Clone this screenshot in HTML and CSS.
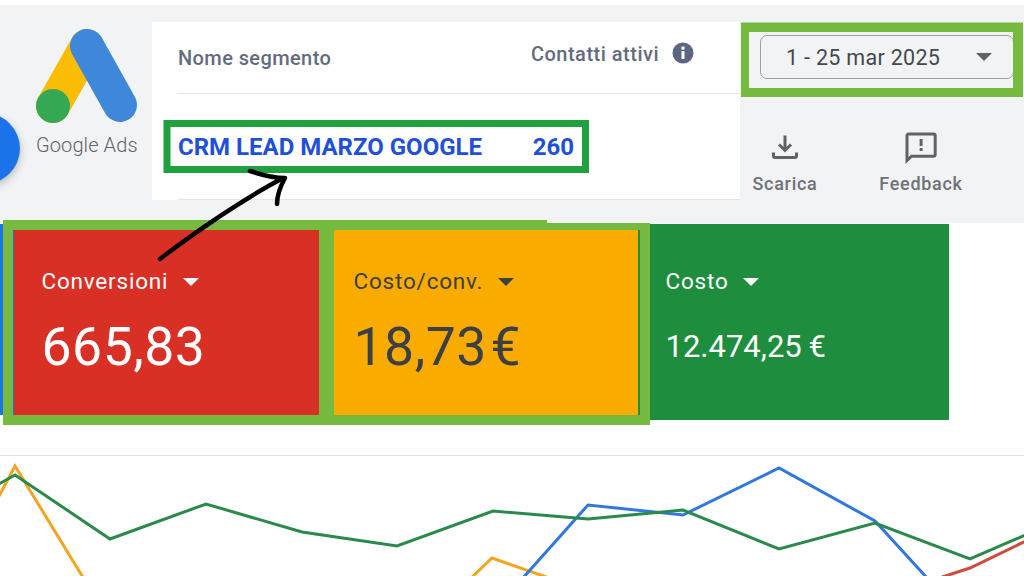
FILE: index.html
```html
<!DOCTYPE html>
<html lang="it">
<head>
<meta charset="utf-8">
<title>Google Ads</title>
<link rel="stylesheet" href="styles.css">
</head>
<body>
<div class="page">
  <header class="top">
    <div class="brand">
      <svg class="brand-mark" viewBox="0 0 104 96" width="104" height="96" aria-hidden="true">
        <line class="mark-yellow" x1="52" y1="17" x2="18" y2="77"/>
        <line class="mark-blue" x1="52" y1="17" x2="85" y2="76"/>
        <circle class="mark-green" cx="18" cy="77" r="17"/>
      </svg>
      <div class="brand-name">Google Ads</div>
    </div>
    <section class="panel">
      <div class="panel-head">
        <span class="head-name">Nome segmento</span>
        <span class="head-count">Contatti attivi
          <svg class="info" viewBox="0 0 22 22" width="22" height="22" aria-hidden="true">
            <circle cx="11" cy="11" r="10.5"/>
            <rect class="info-mark" x="9.5" y="9" width="3" height="8"/>
            <rect class="info-mark" x="9.5" y="4.6" width="3" height="3"/>
          </svg>
        </span>
      </div>
      <div class="panel-row">
        <span>CRM LEAD MARZO GOOGLE</span>
        <span>260</span>
      </div>
    </section>
    <aside class="side">
      <div class="date-wrap">
        <div class="date">
          <span class="date-text">1 - 25 mar 2025</span>
          <span class="caret caret-grey"></span>
        </div>
      </div>
      <div class="actions">
        <div class="action action-dl">
          <svg viewBox="0 0 28 28" width="28" height="28" aria-hidden="true">
            <path class="icon-line" d="M14 2.5V17M8 11.5l6 6 6-6M2.5 19.5v3.2c0 1 .8 1.8 1.8 1.8h19.4c1 0 1.8-.8 1.8-1.8v-3.2"/>
          </svg>
          <span>Scarica</span>
        </div>
        <div class="action action-fb">
          <svg viewBox="0 0 34 32" width="34" height="32" aria-hidden="true">
            <path class="icon-line" d="M3 25.5V3.6C3 2.7 3.7 2 4.6 2h25c.9 0 1.6.7 1.6 1.6v19c0 .9-.7 1.6-1.6 1.6H7.5L3 28.5z"/>
            <rect class="icon-fill" x="15.6" y="7" width="3" height="7"/>
            <rect class="icon-fill" x="15.6" y="16" width="3" height="3"/>
          </svg>
          <span>Feedback</span>
        </div>
      </div>
    </aside>
  </header>

  <section class="cards">
    <div class="card card-blue"></div>
    <div class="card card-red">
      <div class="card-label">Conversioni <span class="caret caret-white"></span></div>
      <div class="card-value">665,83</div>
    </div>
    <div class="card card-orange">
      <div class="card-label">Costo/conv. <span class="caret caret-dark"></span></div>
      <div class="card-value">18,73 €</div>
    </div>
    <div class="card card-green">
      <div class="card-label">Costo <span class="caret caret-white"></span></div>
      <div class="card-value card-value-small">12.474,25 €</div>
    </div>
  </section>

  <section class="chart">
    <svg viewBox="0 0 1024 120" width="1024" height="120" aria-hidden="true">
      <polyline class="line line-yellow" points="-10,512 15,465 84,578" transform="translate(0,-455)"/>
      <polyline class="line line-yellow" points="470,578 492,557 552,578" transform="translate(0,-455)"/>
      <polyline class="line line-blue" points="522,578 588,504 683,514 779,467 875,520 928,578" transform="translate(0,-455)"/>
      <polyline class="line line-red" points="936,578 970,567 1030,538" transform="translate(0,-455)"/>
      <polyline class="line line-green" points="-10,488 15,474 110,538 206,503 302,531 397,545 493,510 588,518 683,509 779,548 875,522 970,558 1030,532" transform="translate(0,-455)"/>
    </svg>
  </section>

  <div class="fab"></div>

  <svg class="notes" viewBox="0 0 1024 576" width="1024" height="576" aria-hidden="true">
    <rect class="note-dark" x="167" y="123.500" width="418.500" height="46"/>
    <path class="note-light-fill" d="M741 22.500H1023V97H741zM749 32V88H1013V32z"/>
    <path class="note-light-fill" d="M3 220H547V223H650V425H3zM13 230V415H319V230zM334 230V415H640V230z"/>
    <path class="note-arrow" d="M160 259C195 232 245 198 283 178M250 171C262 175 272 178 285 178C280 187 277 195 277 204"/>
  </svg>
</div>
</body>
</html>
```
FILE: styles.css
```css
* { box-sizing: border-box; }
html, body { margin: 0; padding: 0; background: #fff; }
.page {
  position: relative;
  width: 1024px;
  height: 576px;
  overflow: hidden;
  padding-top: 5px;
  font-family: Roboto, "Liberation Sans", sans-serif;
  background: #fff;
}
.top {
  display: flex;
  height: 218px;
  padding-top: 17px;
  background: #f1f3f5;
}
.brand { width: 152px; padding: 7px 0 0 36px; }
.brand-mark { display: block; overflow: visible; margin-left: -1px; }
.mark-yellow { stroke: #fbbc04; stroke-width: 34; stroke-linecap: round; }
.mark-blue { stroke: #3f88d9; stroke-width: 34; stroke-linecap: round; }
.mark-green { fill: #34a853; }
.brand-name {
  margin-top: 8px;
  font-size: 20px;
  font-weight: 300;
  letter-spacing: 0.1px;
  color: #5f6368;
  white-space: nowrap;
}
.panel {
  width: 588px;
  height: 178px;
  padding-left: 26px;
  background: #fff;
}
.panel-head {
  display: flex;
  justify-content: space-between;
  height: 72px;
  padding: 24px 46px 0 0;
  border-bottom: 1px solid #e3e5e8;
  color: #646b7d;
  font-size: 20px;
  font-weight: 500;
  letter-spacing: 0.4px;
}
.head-count {
  display: flex;
  gap: 13px;
  height: 24px;
  margin-top: -4px;
  font-size: 20px;
  letter-spacing: 0.5px;
}
.info circle { fill: #5b6682; }
.info-mark { fill: #fff; }
.panel-row {
  display: flex;
  justify-content: space-between;
  width: 562px;
  height: 106px;
  padding: 39px 166px 0 0;
  border-bottom: 1px solid #e3e5e8;
  font-size: 24px;
  font-weight: 700;
  color: #1f50d8;
}
.side { flex: 1; }
.date-wrap { padding: 13px 10px 0 20px; height: 75px; }
.date {
  display: flex;
  align-items: center;
  justify-content: space-between;
  height: 44px;
  padding: 0 21px 0 25px;
  border: 1px solid #9aa0a6;
  border-radius: 7px;
  font-size: 21.500px;
  letter-spacing: 0.3px;
  color: #44484d;
}
.caret {
  display: inline-block;
  width: 0;
  height: 0;
  border-left: 8px solid transparent;
  border-right: 8px solid transparent;
  border-top: 8px solid currentColor;
  vertical-align: 3px;
}
.caret-grey { color: #5f6368; }
.caret-white { color: #fff; margin-left: 8px; }
.caret-dark { color: #3c4043; margin-left: 8px; }
.actions {
  display: flex;
  padding-top: 36px;
  color: #6e7277;
  font-size: 18px;
  font-weight: 500;
  letter-spacing: 0.7px;
}
.action { display: flex; flex-direction: column; align-items: center; }
.action svg { display: block; }
.action-dl { margin-left: 12px; width: 66px; }
.action-fb { margin-left: 60px; width: 86px; margin-top: -1px; }
.action-dl span { margin-top: 12px; }
.action-fb span { margin-top: 9px; }
.icon-line { fill: none; stroke: #5f6368; stroke-width: 3; }
.icon-fill { fill: #5f6368; }
.cards { display: flex; height: 196px; margin-top: 1px; }
.card { padding: 44px 0 0 27.500px; width: 312px; }
.card-blue { width: 14px; height: 191px; padding: 0; background: #1a73e8; }
.card-red { background: #d93025; color: #fff; }
.card-orange { background: #f9ab00; color: #3c4043; }
.card-green { width: 311px; background: #1e8e3e; color: #fff; }
.card-label {
  height: 26px;
  font-size: 22.500px;
  letter-spacing: 0.8px;
  white-space: nowrap;
}
.card-value {
  margin-top: 22px;
  font-size: 53.500px;
  line-height: 62px;
  letter-spacing: 0.5px;
  word-spacing: -10px;
  white-space: nowrap;
}
.card-value-small { font-size: 31px; letter-spacing: 0; word-spacing: -1px; }
.chart {
  margin-top: 35px;
  height: 121px;
  border-top: 1px solid #e3e3e3;
}
.chart svg { display: block; overflow: hidden; }
.line { fill: none; stroke-width: 3; stroke-linejoin: miter; }
.line-yellow { stroke: #f2a51f; }
.line-blue { stroke: #2f78e0; }
.line-red { stroke: #cf4a3c; }
.line-green { stroke: #2a8a4a; }
.fab {
  position: absolute;
  left: -51px;
  top: 113px;
  width: 71px;
  height: 71px;
  border-radius: 50%;
  background: #1a73e8;
  box-shadow: 0 3px 8px rgba(0, 0, 0, 0.25);
}
.notes { position: absolute; left: 0; top: 0; pointer-events: none; }
.note-dark { fill: none; stroke: #21a03f; stroke-width: 7; }
.note-light-fill { fill: #76bb40; fill-rule: evenodd; }
.note-arrow { fill: none; stroke: #000; stroke-width: 4.500; stroke-linecap: round; stroke-linejoin: round; }
```
